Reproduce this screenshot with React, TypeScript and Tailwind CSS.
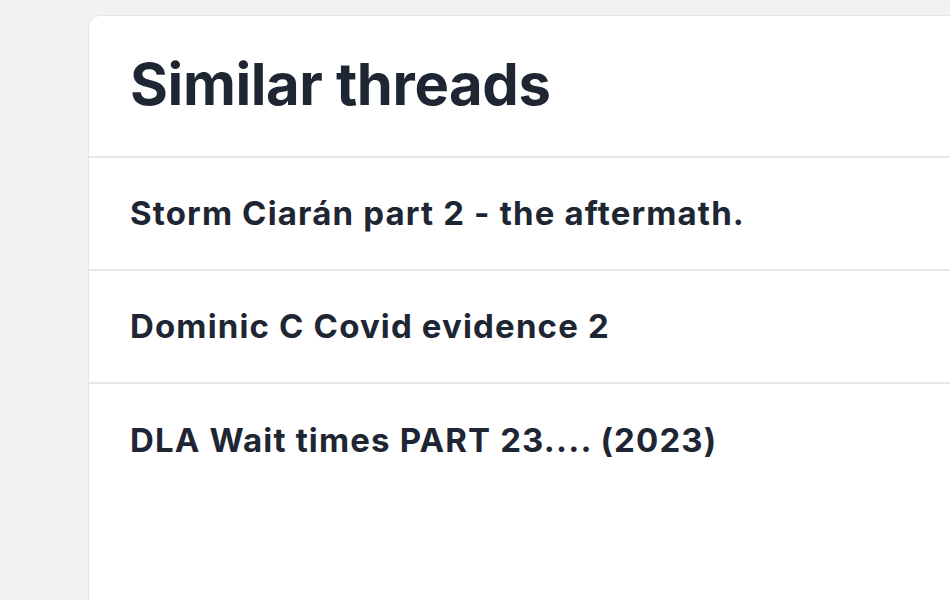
import React from "react";

const threads = [
  "Storm Ciarán part 2 - the aftermath.",
  "Dominic C Covid evidence 2",
  "DLA Wait times PART 23.... (2023)",
];

const App: React.FC = () => {
  return (
    <div
      className="h-[600px] w-[950px] overflow-hidden bg-[#f1f2f4] pl-[88px] pt-[15px]"
      style={{ fontFamily: "Inter, 'Liberation Sans', sans-serif" }}
    >
      {/* Card */}
      <div className="h-[700px] w-[960px] rounded-[12px] border border-[#e3e5e8] bg-white">
        {/* Header */}
        <div className="flex h-[142px] items-center border-b-2 border-[#e6e7ea] pb-[4px] pl-[41px]">
          <h2 className="text-[58px] font-bold leading-none tracking-[-0.4px] text-[#1e2634]">
            Similar threads
          </h2>
        </div>

        {/* Thread list */}
        {threads.map((title, i) => (
          <div
            key={title}
            className={`flex h-[113px] items-center pl-[41px] ${
              i < threads.length - 1 ? "border-b-2 border-[#e6e7ea]" : ""
            }`}
          >
            <span className="text-[33px] font-bold leading-none tracking-[1.15px] text-[#1e2634]">
              {title}
            </span>
          </div>
        ))}
      </div>
    </div>
  );
};

export default App;
